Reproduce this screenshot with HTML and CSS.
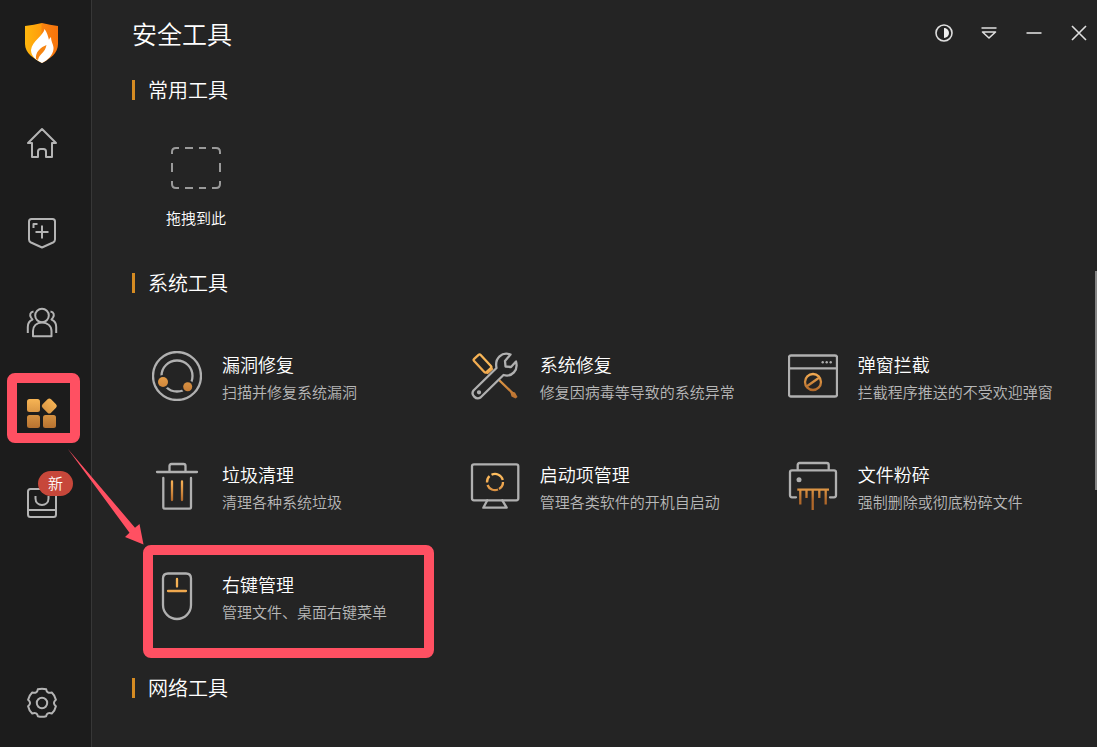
FILE: index.html
```
<!DOCTYPE html>
<html lang="zh-CN">
<head>
<meta charset="utf-8">
<meta name="viewport" content="width=device-width, initial-scale=1">
<title>安全工具</title>
<link rel="stylesheet" href="styles.css">
</head>
<body>
<svg class="defs" aria-hidden="true">
  <defs>
    <linearGradient id="gold" gradientUnits="userSpaceOnUse" x1="0" y1="0" x2="0" y2="50">
      <stop offset="0" stop-color="#ffc05e"/><stop offset=".4" stop-color="#efa84e"/><stop offset="1" stop-color="#b46a2c"/>
    </linearGradient>
    <linearGradient id="gold-small" gradientUnits="userSpaceOnUse" x1="0" y1="0" x2="0" y2="32">
      <stop offset="0" stop-color="#fbb957"/><stop offset="1" stop-color="#b5702f"/>
    </linearGradient>
    <linearGradient id="gold-mid" gradientUnits="userSpaceOnUse" x1="0" y1="12" x2="0" y2="40">
      <stop offset="0" stop-color="#ffbf60"/><stop offset=".4" stop-color="#f0a850"/><stop offset="1" stop-color="#b0682a"/>
    </linearGradient>
    <linearGradient id="shield" x1="0" y1="0" x2="1" y2="0">
      <stop offset="0" stop-color="#ffb70d"/><stop offset=".48" stop-color="#ff9d0c"/>
      <stop offset=".52" stop-color="#f98410"/><stop offset="1" stop-color="#f6730c"/>
    </linearGradient>
  </defs>
</svg>

<div class="app">
  <aside class="sidebar">
    <svg class="logo" viewBox="0 0 34 41" aria-hidden="true">
      <path fill="url(#shield)" d="M17 1Q25 3 33 4V22C33 31 25 37 17 41C9 37 0 31 0 22V4Q9 3 17 1Z"/>
      <path fill="#fff" d="M19.500 7C19 13 7 19 6 28C6 34 11 38 17 41C23 38 28 33 28.500 27C29 23 26 20 26 15C25 16 24 17 24 18C23 14 22 10 19.500 7Z"/>
      <path fill="#f68512" d="M21.500 23C16 25 10 30 11 37L13 38C14 32 20 31 21.500 23Z"/>
    </svg>
    <nav class="nav" aria-label="主导航">
      <button class="nav-item" aria-label="首页">
        <svg class="icon" viewBox="0 0 32 32"><path d="M16 2L2 16H6V30H12V24.500Q12 22 14.500 22H17.500Q20 22 20 24.500V30H26V16H30Z"/></svg>
      </button>
      <button class="nav-item" aria-label="病毒查杀">
        <svg class="icon" viewBox="0 0 32 32"><path d="M5.500 2H26.500Q29 2 29 4.500V22.500Q29 24.500 27 25.500L16 30.500L5 25.500Q3 24.500 3 22.500V4.500Q3 2 5.500 2ZM16 8.500V21.500M9.500 15H22.500M7.500 11V7H11.500"/></svg>
      </button>
      <button class="nav-item" aria-label="家庭防护">
        <svg class="icon" viewBox="0 0 32 32"><circle cx="16" cy="8.500" r="6.800"/><path d="M7 29.300V24C7 19 10.500 15.500 16 15.500C21.500 15.500 25.500 19 25.500 24V29.300ZM7.500 4.500C4 5 3.500 8 5 10.500L6.500 12.500C3 14 1.800 17 1.800 20V26M24.500 4.500C28 5 28.500 8 27 10.500L25.500 12.500C29 14 30.200 17 30.200 20V26"/></svg>
      </button>
      <button class="nav-item" aria-label="安全工具" aria-current="page">
        <svg class="icon" viewBox="0 0 32 32"><g class="gold-small"><rect x="1" y="2" width="13" height="13" rx="2.500"/><rect x="1" y="18" width="13" height="13" rx="2.500"/><rect x="17" y="18" width="13" height="13" rx="2.500"/><rect x="17.300" y="3" width="12" height="12" rx="2.500" transform="rotate(45 23.300 9)"/></g></svg>
        <span class="marker marker-nav"></span>
      </button>
      <button class="nav-item" aria-label="商城 新">
        <svg class="icon" viewBox="0 0 32 32"><rect x="2" y="2" width="28" height="28" rx="2.500"/><path d="M2 23H30M9.500 9V11.500C9.500 20 22.500 20 22.500 11.500V9"/></svg>
        <span class="badge">新</span>
      </button>
    </nav>
    <button class="nav-item settings" aria-label="设置">
      <svg class="icon" viewBox="0 0 32 32"><circle cx="16" cy="17" r="5.200"/><path d="M11.800 3.300Q16 2 20.200 3.300Q20.800 8 25.800 6.500Q29 9.500 29.900 13.800Q26 17 29.900 20.200Q29 24.500 25.800 27.500Q20.800 26 20.200 30.200Q16 31.500 11.800 30.200Q11.200 26 6.200 27.500Q3 24.500 2.100 20.200Q6 17 2.100 13.800Q3 9.500 6.200 6.500Q11.200 8 11.800 3.300Z"/></svg>
    </button>
  </aside>

  <main class="main">
    <header class="header">
      <h1>安全工具</h1>
      <div class="window-controls">
        <button aria-label="切换主题"><svg viewBox="0 0 24 24"><circle cx="12" cy="12" r="8"/><path class="solid" d="M12 7A5 5 0 0 1 12 17Z"/></svg></button>
        <button aria-label="菜单"><svg viewBox="0 0 24 24"><path d="M4.500 7H19.500M5.500 11H18.500L12 17Z"/></svg></button>
        <button aria-label="最小化"><svg viewBox="0 0 24 24"><path d="M4.500 12H19.500"/></svg></button>
        <button aria-label="关闭"><svg viewBox="0 0 24 24"><path d="M5 5L19 19M19 5L5 19"/></svg></button>
      </div>
    </header>

    <section>
      <h2>常用工具</h2>
      <div class="drop">
        <svg class="drop-box" viewBox="0 0 50 42" aria-hidden="true"><path d="M1 7V5Q1 1 5 1H8M14 1H22M28 1H35M41 1H45Q49 1 49 5V7M49 16V25M49 34V37Q49 41 45 41H41M35 41H28M22 41H14M8 41H5Q1 41 1 37V34M1 25V16"/></svg>
        <span>拖拽到此</span>
      </div>
    </section>

    <section>
      <h2>系统工具</h2>
      <div class="tools">
        <button class="tool">
          <svg class="tool-icon" viewBox="0 0 50 50"><circle cx="25" cy="25" r="24"/><circle cx="25" cy="25" r="15.500"/><circle class="cutout" cx="11" cy="31" r="7"/><circle class="cutout" cx="35.700" cy="35.700" r="6.500"/><circle class="gold-fill" cx="11" cy="31" r="5"/><circle class="gold-fill" cx="35.700" cy="35.700" r="4.500"/></svg>
          <span class="tool-text"><span class="tool-name">漏洞修复</span><span class="tool-desc">扫描并修复系统漏洞</span></span>
        </button>
        <button class="tool">
          <svg class="tool-icon" viewBox="0 0 50 50"><g class="gold"><rect x="3.500" y="8" width="18" height="9" rx="1.500" transform="rotate(47 12.500 12.500)"/><path d="M17.500 22L22 18M29 29L42 41.500"/><path class="gold-fill" d="M40 40L45 41.500L47.500 46L45.500 47.500L41.500 45.500Z"/></g><path d="M40.500 3.500C32 0.500 24.500 7 26.500 17L3.500 39.500C0.500 43.500 6 49.500 10.500 46.500L33.500 24C42 26.500 48.500 19 46 10.500L41 16L35.500 15.500L35 10Z"/><circle cx="9" cy="41.300" r="1"/></svg>
          <span class="tool-text"><span class="tool-name">系统修复</span><span class="tool-desc">修复因病毒等导致的系统异常</span></span>
        </button>
        <button class="tool">
          <svg class="tool-icon" viewBox="0 0 50 50"><rect x="1" y="4.500" width="48" height="41" rx="2"/><path d="M1 17.300H49"/><g class="dots"><circle cx="34.700" cy="11.300" r="1.200"/><circle cx="38.700" cy="11.300" r="1.200"/><circle cx="42.700" cy="11.300" r="1.200"/></g><g class="gold-mid"><circle cx="25" cy="31" r="8"/><path d="M20 34.500L30 27.500"/></g></svg>
          <span class="tool-text"><span class="tool-name">弹窗拦截</span><span class="tool-desc">拦截程序推送的不受欢迎弹窗</span></span>
        </button>
        <button class="tool">
          <svg class="tool-icon" viewBox="0 0 50 50"><path d="M5 11H45M17.500 11V5Q17.500 3 19.500 3H31.500Q33.500 3 33.500 5V11M11.300 17V46Q11.300 47.700 13 47.700H37.300Q39 47.700 39 46V17"/><path class="gold-mid" d="M20 20.500V39M30 20.500V39"/></svg>
          <span class="tool-text"><span class="tool-name">垃圾清理</span><span class="tool-desc">清理各种系统垃圾</span></span>
        </button>
        <button class="tool">
          <svg class="tool-icon" viewBox="0 0 50 50"><rect x="2" y="3.300" width="46.300" height="36" rx="2"/><path d="M17.300 39.300L13.300 46.700H36.700L32.300 39.300"/><path class="gold-mid butt" d="M21.500 13.800A8 8 0 0 1 32.800 19M33 21A8 8 0 0 1 29 28M28 28.500A8 8 0 0 1 17.500 24M17 21.500A8 8 0 0 1 19.500 15.200"/></svg>
          <span class="tool-text"><span class="tool-name">启动项管理</span><span class="tool-desc">管理各类软件的开机自启动</span></span>
        </button>
        <button class="tool">
          <svg class="tool-icon" viewBox="0 0 50 50"><path d="M9.700 9V4Q9.700 2 11.700 2H38.700Q40.700 2 40.700 4V9M8 36.300H4Q2 36.300 2 34.300V11.300Q2 9.300 4 9.300H46Q48 9.300 48 11.300V34.300Q48 36.300 46 36.300H42"/><circle class="grey-fill" cx="11" cy="18.700" r="2.500"/><path class="gold-mid butt" d="M9.300 28.700H41M12.300 28V43.500M18.500 28V37M24.700 28V49M31.300 28V37M37.700 28V43.500"/></svg>
          <span class="tool-text"><span class="tool-name">文件粉碎</span><span class="tool-desc">强制删除或彻底粉碎文件</span></span>
        </button>
        <button class="tool">
          <svg class="tool-icon" viewBox="0 0 50 50"><path d="M16 2.500H34Q39 2.500 39 7.500V34A14 14 0 0 1 11 34V7.500Q11 2.500 16 2.500Z"/><path class="gold" d="M25 8V15.500M16 20H34"/></svg>
          <span class="tool-text"><span class="tool-name">右键管理</span><span class="tool-desc">管理文件、桌面右键菜单</span></span>
          <span class="marker marker-tool"></span>
        </button>
      </div>
    </section>

    <section>
      <h2>网络工具</h2>
    </section>
    <div class="scroll-thumb"></div>
  </main>
  <svg class="arrow" viewBox="0 0 90 110" aria-hidden="true"><path d="M7.500 8.500L75 87.700L79.500 84L83.500 104.500L65 97L69.500 92.700Z"/></svg>
</div>
</body>
</html>
```
FILE: styles.css
```
* {
  box-sizing: border-box;
}

body {
  margin: 0;
  background: #242424;
  color: #fff;
  font-family: "Noto Sans CJK SC", sans-serif;
  font-weight: 350;
}

button {
  margin: 0;
  padding: 0;
  border: 0;
  background: none;
  color: inherit;
  font: inherit;
  text-align: left;
  cursor: pointer;
}

svg {
  display: block;
  flex: none;
  fill: none;
  stroke-linejoin: round;
}

.defs {
  position: absolute;
  width: 0;
  height: 0;
}

.app {
  position: relative;
  display: grid;
  grid-template-columns: 92px minmax(0, 1fr);
  min-height: 100vh;
}

/* Sidebar */
.sidebar {
  display: flex;
  flex-direction: column;
  align-items: center;
  padding: 22px 7px 0 0;
  background: #1c1c1c;
  border-right: 1px solid #373737;
}

.logo {
  width: 34px;
  height: 41px;
}

.nav {
  margin-top: 35px;
}

.nav-item {
  position: relative;
  display: flex;
  align-items: center;
  justify-content: center;
  width: 84px;
  height: 90px;
}

.settings {
  margin-top: auto;
}

.icon {
  width: 32px;
  height: 32px;
  stroke: #b4b4b4;
  stroke-width: 2;
}

.gold-small {
  fill: url(#gold-small);
  stroke: none;
}

.badge {
  position: absolute;
  top: 13px;
  left: 38px;
  width: 35px;
  height: 25px;
  border-radius: 13px;
  background: #c7473a;
  color: #fff;
  font-size: 15px;
  line-height: 24px;
  text-align: center;
}

/* Highlights */
.marker {
  position: absolute;
  border: 10px solid #ff5062;
  border-radius: 8px;
  pointer-events: none;
}

.marker-nav {
  inset: 5px 4px 15px 7px;
}

.marker-tool {
  top: 4px;
  left: -9px;
  width: 291px;
  height: 113px;
}

.arrow {
  position: absolute;
  top: 440px;
  left: 60px;
  width: 90px;
  height: 110px;
  fill: #ff5062;
  pointer-events: none;
}

/* Main area */
.main {
  position: relative;
  padding: 16px 0 0 40px;
}

.header {
  display: flex;
  justify-content: space-between;
  padding-right: 6px;
}

h1,
h2 {
  margin: 0;
  font-weight: 350;
}

h1 {
  font-size: 25px;
  line-height: 34px;
}

.window-controls {
  display: flex;
  gap: 21px;
  padding-top: 5px;
}

.window-controls button,
.window-controls svg {
  width: 24px;
  height: 24px;
}

.window-controls svg {
  stroke: #dedede;
  stroke-width: 1.6;
}

.window-controls .solid {
  fill: #f0f0f0;
  stroke: none;
}

h2 {
  display: flex;
  align-items: center;
  gap: 13px;
  font-size: 20px;
  line-height: 30px;
}

h2::before {
  content: "";
  width: 3px;
  height: 20px;
  background: #d58b22;
}

.header + section {
  margin-top: 25px;
}

.drop {
  display: flex;
  flex-direction: column;
  align-items: center;
  gap: 18px;
  width: 128px;
  padding: 42px 0 39px;
  font-size: 15px;
  line-height: 22px;
}

.drop-box {
  width: 50px;
  height: 42px;
  stroke: #9a9a9a;
  stroke-width: 2;
}

.tools {
  display: grid;
  grid-template-columns: 12fr 12fr 11fr;
  grid-auto-rows: 110px;
  padding: 23px 18px 22px 20px;
}

.tool {
  position: relative;
  display: flex;
  align-items: center;
  gap: 20px;
}

.tool-text {
  display: flex;
  flex-direction: column;
  padding-top: 3px;
  line-height: 28px;
  white-space: nowrap;
}

.tool-name {
  font-size: 18px;
}

.tool-desc {
  color: #b8b8b8;
  font-size: 15px;
}

.tool-icon {
  width: 50px;
  height: 50px;
  stroke: #b0b0b0;
  stroke-width: 2.3;
  stroke-linecap: round;
}

.gold {
  stroke: url(#gold);
}

.gold-mid {
  stroke: url(#gold-mid);
}

.gold-fill {
  fill: url(#gold);
  stroke: none;
}

.grey-fill,
.dots {
  fill: #b0b0b0;
  stroke: none;
}

.butt {
  stroke-linecap: butt;
}

.cutout {
  fill: #242424;
  stroke: none;
}

.scroll-thumb {
  position: absolute;
  top: 271px;
  right: 0;
  width: 2px;
  height: 219px;
  background: #858585;
}
```
